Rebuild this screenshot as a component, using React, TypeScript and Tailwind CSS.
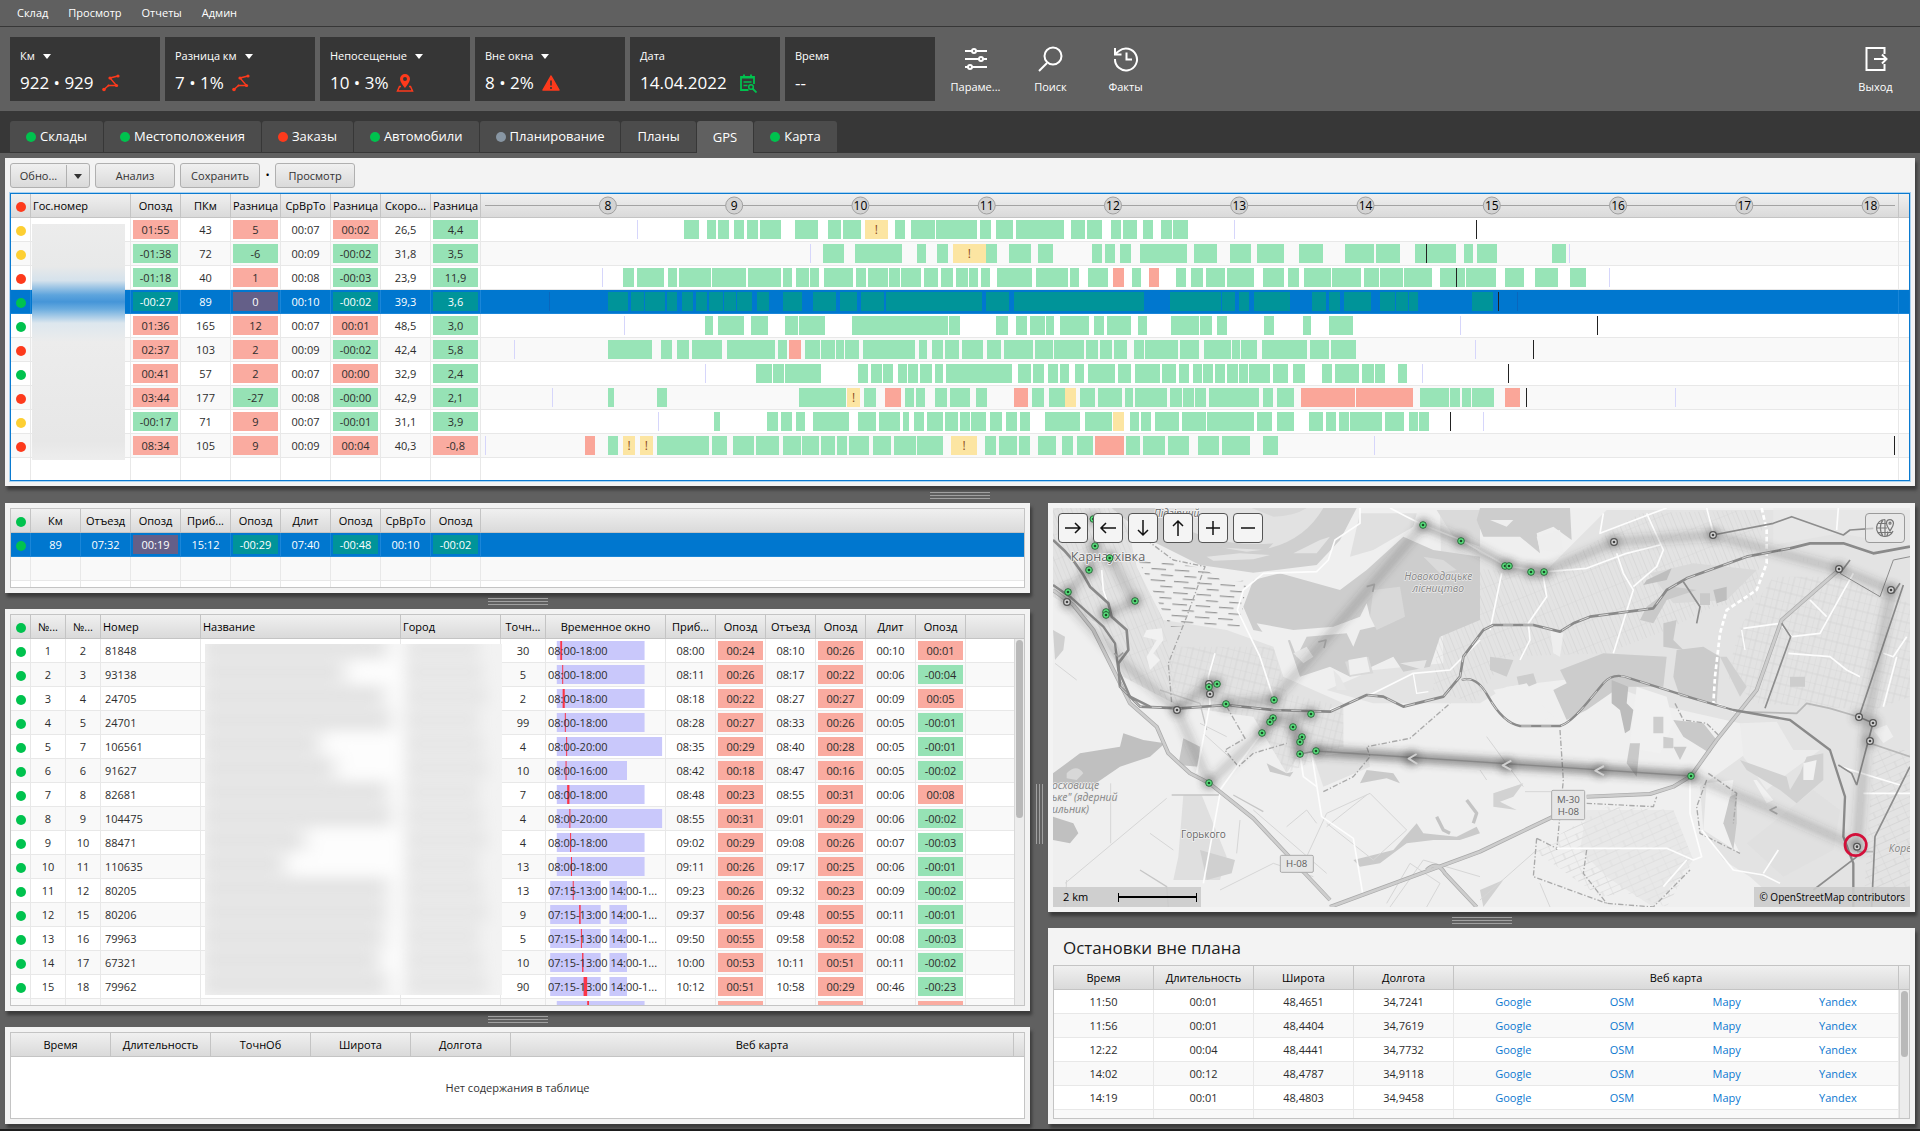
import { ReactNode } from "react";
import { clsx } from "clsx";

type Tone = "g" | "r" | "";

const badge: Record<string, string> = {
  g: "bg-[#96e2b5]",
  r: "bg-[#faaba0]",
  "": "",
};
const selectedBadge: Record<string, string> = {
  g: "bg-[#009499]",
  r: "bg-[#645f88]",
  "": "",
};
const dotColor: Record<string, string> = {
  g: "bg-[#00c24e]",
  r: "bg-[#fd3a1c]",
  y: "bg-[#fdcf33]",
  n: "bg-[#8896a3]",
};

function Dot({ color }: { color: string }) {
  return <span className={clsx("inline-block size-[10px] rounded-full align-middle", dotColor[color])} />;
}

function Caret({ className }: { className?: string }) {
  return (
    <svg viewBox="0 0 8 5" className={clsx("h-[5px] w-2", className)} fill="currentColor">
      <path d="M0 0h8L4 5z" />
    </svg>
  );
}

/* ---------- header ---------- */

function RouteIcon() {
  return (
    <svg viewBox="0 0 18 18" className="size-[18px]" fill="none" stroke="#fd3a1c" strokeWidth="1.4">
      <path d="M2 15.500L6.500 11.500 14.500 11.500 8 4 16 2" />
      <g fill="#fd3a1c" stroke="none">
        <circle cx="2" cy="15.500" r="1.800" />
        <circle cx="6.500" cy="11.500" r="1" />
        <circle cx="14.500" cy="11.500" r="1.600" />
        <circle cx="8" cy="4" r="1.600" />
        <circle cx="16" cy="2" r="1.600" />
      </g>
    </svg>
  );
}

function PinIcon() {
  return (
    <svg viewBox="0 0 18 18" className="size-[18px]" fill="#fd3a1c">
      <path d="M9 0a5 5 0 0 0-5 5C4 8.200 9 14 9 14s5-5.800 5-9a5 5 0 0 0-5-5zm0 7a2 2 0 1 1 0-4 2 2 0 0 1 0 4z" fillRule="evenodd" />
      <path d="M5 12.500H3.500L1.500 17h15l-2-4.500H13" fill="none" stroke="#fd3a1c" strokeWidth="1.500" />
    </svg>
  );
}

function WarnIcon() {
  return (
    <svg viewBox="0 0 18 18" className="size-[18px]" fill="#fd3a1c">
      <path d="M9 2L1 16h16z" stroke="#fd3a1c" strokeWidth="1.500" strokeLinejoin="round" />
      <path d="M9 6.500v5M9 13v2" stroke="#363636" strokeWidth="1.600" />
    </svg>
  );
}

function CalendarIcon() {
  return (
    <svg viewBox="0 0 18 20" className="ml-1 h-5 w-[18px]" fill="none" stroke="#00c24e" strokeWidth="1.800">
      <path d="M15 11V4h-13v13H9.500M5 1.500v4M12 1.500v4M2 4.500h13" />
      <path d="M4.500 9h8M4.500 12.500h4" strokeWidth="1.500" />
      <circle cx="12" cy="14" r="2.300" strokeWidth="1.500" />
      <path d="M13.500 15.500l4 4" />
    </svg>
  );
}

function Metric({ label, value, icon, caret }: { label: string; value: string; icon?: ReactNode; caret?: boolean }) {
  return (
    <div className="flex h-16 w-[150px] flex-col bg-[#363636] px-[10px] pt-[9px] text-white">
      <div className="flex items-center gap-2 text-[11px] leading-5">
        {label}
        {caret && <Caret />}
      </div>
      <div className="flex items-center gap-2 pt-[5px] text-[17px] leading-6">
        {value}
        {icon}
      </div>
    </div>
  );
}

function Tool({ label, children }: { label: string; children: ReactNode }) {
  return (
    <button className="flex w-[75px] flex-col items-center gap-[6px] pt-2 text-[11px] leading-4 text-white">
      <svg viewBox="0 0 28 28" className="size-7" fill="none" stroke="white" strokeWidth="2">
        {children}
      </svg>
      {label}
    </button>
  );
}

function Header() {
  return (
    <header className="flex h-[84px] items-start pt-[10px] pr-[7px] pl-[10px]">
      <div className="flex gap-[5px]">
        <Metric label="Км" value="922 • 929" icon={<RouteIcon />} caret />
        <Metric label="Разница км" value="7 • 1%" icon={<RouteIcon />} caret />
        <Metric label="Непосещеные" value="10 • 3%" icon={<PinIcon />} caret />
        <Metric label="Вне окна" value="8 • 2%" icon={<WarnIcon />} caret />
        <Metric label="Дата" value="14.04.2022" icon={<CalendarIcon />} />
        <Metric label="Время" value="--" />
      </div>
      <div className="flex pl-[3px]">
        <Tool label="Параме...">
          <path d="M3 6h7M14 6h11M3 14h14M21 14h4M3 22h3M10 22h15" />
          <circle cx="12" cy="6" r="2" />
          <circle cx="19" cy="14" r="2" />
          <circle cx="8" cy="22" r="2" />
        </Tool>
        <Tool label="Поиск">
          <circle cx="16" cy="11" r="8.500" />
          <path d="M10 18l-8 8" />
        </Tool>
        <Tool label="Факты">
          <path d="M3 14a11 11 0 1 0 4-8L3 9M3 3v6.500h6.500M14.500 7.500v7H20" />
        </Tool>
      </div>
      <div className="ml-auto">
        <Tool label="Выход">
          <path d="M22.500 9V3H4.500v22h18v-6M12 14h12M20 9.500l4.500 4.500-4.500 4.500" />
        </Tool>
      </div>
    </header>
  );
}

const tabs: [string, string][] = [
  ["g", "Склады"],
  ["g", "Местоположения"],
  ["r", "Заказы"],
  ["g", "Автомобили"],
  ["n", "Планирование"],
  ["", "Планы"],
  ["", "GPS"],
  ["g", "Карта"],
];

function Tabs() {
  return (
    <nav className="flex h-[42px] items-end gap-px bg-[#373737] px-[10px]">
      {tabs.map(([color, label]) => (
        <button
          key={label}
          className={clsx(
            "flex items-center gap-1 rounded-t-[3px] px-4 pt-px text-[13px] text-white",
            label === "GPS" ? "h-8 bg-[#606060]" : "mb-px h-[31px] bg-[#4c4c4c]"
          )}
        >
          {color && <Dot color={color} />}
          {label}
        </button>
      ))}
    </nav>
  );
}

/* ---------- shared panel parts ---------- */

function Panel({ className, children }: { className?: string; children: ReactNode }) {
  return (
    <section className={clsx("flex min-h-0 flex-col bg-[#f3f3f3] p-[5px] shadow-[2px_4px_3px_#3b3b3b]", className)}>
      {children}
    </section>
  );
}

function Grip({ vertical }: { vertical?: boolean }) {
  if (vertical) {
    return (
      <div className="flex w-[18px] items-center justify-center gap-[2px]">
        <i className="h-[60px] w-px bg-[#a0a0a0]" />
        <i className="h-[60px] w-px bg-[#a0a0a0]" />
        <i className="h-[60px] w-px bg-[#a0a0a0]" />
      </div>
    );
  }
  return (
    <div className="flex h-4 shrink-0 flex-col items-center justify-center gap-[2px]">
      <i className="h-px w-[60px] bg-[#a0a0a0]" />
      <i className="h-px w-[60px] bg-[#a0a0a0]" />
      <i className="h-px w-[60px] bg-[#a0a0a0]" />
    </div>
  );
}

function Cols({ widths }: { widths: number[] }) {
  return (
    <colgroup>
      {widths.map((w, i) => (
        <col key={i} style={w ? { width: w } : undefined} />
      ))}
    </colgroup>
  );
}

function Th({ children, left }: { children?: ReactNode; left?: boolean }) {
  return (
    <th
      className={clsx(
        "h-6 overflow-hidden border-r border-b border-[#c4c4c4] bg-linear-to-b from-[#f0f0f0] to-[#dadada] p-0 font-normal whitespace-nowrap text-black last:border-r-0",
        left && "text-left"
      )}
    >
      <div className={clsx("h-[19px] leading-[19px]", left && "pl-[2px]")}>{children}</div>
    </th>
  );
}

function Td({ children, tone = "", selected, left }: { children?: ReactNode; tone?: Tone; selected?: boolean; left?: boolean }) {
  return (
    <td
      className={clsx(
        "h-6 overflow-hidden border-r border-b px-[2px] py-0 whitespace-nowrap last:border-r-0",
        selected ? "border-[#1a86d8] text-white" : "border-[#e8e8e8]",
        left ? "text-left" : "text-center"
      )}
    >
      <div className={clsx("h-[19px] leading-[19px]", selected ? selectedBadge[tone] : badge[tone], left && "pl-[2px]")}>
        {children}
      </div>
    </td>
  );
}

function Scrollbar({ thumb }: { thumb: string }) {
  return (
    <div className="absolute top-6 right-0 bottom-0 w-[10px] border-l border-[#d8d8d8] bg-[#ececec] px-px pt-px">
      <div className={clsx("w-[7px] rounded-full bg-[#b9b9b9]", thumb)} />
    </div>
  );
}

const tableClass = "w-full table-fixed border-separate border-spacing-0 text-[11px] text-[#2d2d2d]";

/* ---------- vehicles and timeline ---------- */

// 300 units to the hour, hour 8 stands at 19
const AXIS_START = -273;
const AXIS_SPAN = 3350;
const pct = (v: number) => `${((v - AXIS_START) / AXIS_SPAN) * 100}%`;
const span = (v: number) => `${(v / AXIS_SPAN) * 100}%`;

type Vehicle = {
  status: string;
  cells: string[];
  tones: string;
  bars: string;
  plan: number[];
  end: number;
};

// bars: "from:to", r = red, y = yellow, ! = yellow with a mark
const vehicles: Vehicle[] = [
  {
    status: "y",
    cells: ["01:55", "43", "5", "00:07", "00:02", "26,5", "4,4"],
    tones: "r_r_r_g",
    bars: "200:235 254:277 281:306 318:342 350:375 380:430 463:518 542:572 577:620 630:684! 702:724 740:796 798:897 903:929 942:981 988:1103 1119:1153 1157:1194 1214:1238 1243:1277 1290:1314 1334:1359 1361:1398",
    plan: [88, 1506],
    end: 2082,
  },
  {
    status: "y",
    cells: ["-01:38", "72", "-6", "00:09", "-00:02", "31,8", "3,5"],
    tones: "g_g_g_g",
    bars: "530:580 606:717 753:774 800:828 838:917! 918:944 972:1024 1041:1076 1170:1192 1200:1224 1235:1262 1283:1395 1412:1466 1497:1547 1561:1625 1661:1718 1770:1839 1844:1902 1937:2035 2054:2074 2084:2132 2261:2295",
    plan: [498, 2303],
    end: 1962,
  },
  {
    status: "r",
    cells: ["-01:18", "40", "1", "00:08", "-00:03", "23,9", "11,9"],
    tones: "g_r_g_g",
    bars: "55:82 88:153 162:183 189:264 266:348 352:430 435:457 466:496 498:520 532:601 608:632 637:684 688:713 716:763 771:803 811:839 846:874 877:899 906:927 943:1026 1036:1112 1117:1139 1159:1208 1218:1245r 1265:1286 1304:1328r 1368:1393 1405:1434 1440:1486 1491:1555 1575:1625 1636:1662 1672:1737 1740:1809 1815:1851 1853:1909 1911:1978 1996:2055 2057:2129 2151:2196 2222:2276 2304:2342",
    plan: [5, 2398],
    end: 2035,
  },
  {
    status: "g",
    cells: ["-00:27", "89", "0", "00:10", "-00:02", "39,3", "3,6"],
    tones: "g_r_g_g",
    bars: "19:67 73:105 107:155 160:184 194:221 228:254 260:292 294:324 326:361 373:402 435:480 506:561 570:612 620:674 680:908 918:972 984:1293 1355:1476 1478:1509 1518:1543 1555:1640 1692:1726 1733:1759 1767:1832 1853:1888 1891:1921 1923:1943 2071:2122",
    plan: [-121, 2180],
    end: 2134,
  },
  {
    status: "g",
    cells: ["01:36", "165", "12", "00:07", "00:01", "48,5", "3,0"],
    tones: "r_r_r_g",
    bars: "249:269 280:342 359:399 440:470 473:498 500:535 599:826 829:855 941:970 988:1014 1023:1057 1060:1079 1092:1162 1174:1197 1205:1262 1279:1300 1357:1423 1425:1454 1466:1490 1577:1601 1670:1689 1733:1789",
    plan: [58, 2044],
    end: 2369,
  },
  {
    status: "r",
    cells: ["02:37", "103", "2", "00:09", "-00:02", "42,4", "5,8"],
    tones: "r_r_g_g",
    bars: "19:124 144:171 183:212 219:291 303:415 422:445 449:478r 487:523 525:558 561:580 582:615 626:748 758:778 789:814 820:854 860:910 919:954 961:1030 1033:1076 1078:1150 1155:1184 1187:1216 1221:1253 1269:1292 1295:1373 1379:1423 1436:1470 1472:1499 1501:1521 1523:1562 1573:1681 1687:1732 1737:1796",
    plan: [-205, 2080],
    end: 2216,
  },
  {
    status: "g",
    cells: ["00:41", "57", "2", "00:07", "00:00", "32,9", "2,4"],
    tones: "r_r_r_g",
    bars: "371:409 411:437 440:526 613:637 645:670 672:696 708:729 733:755 760:790 796:816 822:979 994:1025 1030:1055 1065:1089 1092:1114 1128:1151 1159:1224 1231:1261 1271:1330 1335:1369 1377:1399 1409:1430 1433:1457 1461:1486 1490:1516 1518:1539 1542:1592 1599:1635 1647:1676 1715:1740 1746:1803 1810:1839 1842:1866 1895:1917",
    plan: [249, 1954],
    end: 2158,
  },
  {
    status: "r",
    cells: ["03:44", "177", "-27", "00:08", "-00:00", "42,9", "2,1"],
    tones: "r_g_g_g",
    bars: "19:34 135:159 473:584 588:618! 627:656 677:716r 725:746 750:773 796:824 832:879 893:919 983:1018r 1026:1054 1068:1105 1106:1131y 1140:1177 1183:1240 1247:1267 1272:1348 1354:1383 1386:1411 1414:1440 1446:1565 1575:1600 1608:1650 1665:1794r 1796:1931r 1948:2017 2019:2043 2048:2070 2072:2124 2150:2186r",
    plan: [-114, 2555],
    end: 2200,
  },
  {
    status: "y",
    cells: ["-00:17", "71", "9", "00:07", "-00:01", "31,1", "3,9"],
    tones: "g_r_g_g",
    bars: "271:285 397:423 430:456 467:487 506:593 613:656 663:713 720:735 747:771 777:816 820:851 855:879 881:918 926:955 966:992 997:1022 1058:1140 1152:1216 1218:1246y 1259:1281 1285:1309 1320:1377 1383:1440 1442:1554 1561:1597 1608:1649 1684:1718 1726:1750 1756:1780 1783:1859 1866:1910 1923:1943 1945:1970",
    plan: [139, 2099],
    end: 2020,
  },
  {
    status: "r",
    cells: ["08:34", "105", "9", "00:09", "00:04", "40,3", "-0,8"],
    tones: "r_r_r_r",
    bars: "-36:-11r 19:44 55:84! 96:125! 135:260 266:303 316:367 370:426 435:478 480:520 526:558 563:587 592:639 650:691 698:751 753:816 834:896! 915:941 949:992 995:1022 1040:1083 1099:1124 1133:1171 1176:1246r 1250:1283 1290:1342 1349:1399 1421:1472 1478:1545 1576:1611",
    plan: [-272, 1838],
    end: 3074,
  },
];

function Timeline({ vehicle, selected }: { vehicle: Vehicle; selected: boolean }) {
  return (
    <svg className="block h-[19px] w-full" shapeRendering="crispEdges">
      {vehicle.plan.map((p) => (
        <rect key={p} x={pct(p)} width="1" height="19" fill={selected ? "#0a66bd" : "#d6d6fb"} />
      ))}
      {vehicle.bars.split(" ").map((bar) => {
        const [from, to] = bar.replace(/[ry!]/, "").split(":").map(Number);
        const yellow = bar.endsWith("!") || bar.endsWith("y");
        const fill = selected ? "#009499" : yellow ? "#fce5a2" : bar.endsWith("r") ? "#faa699" : "#98e4b7";
        return (
          <g key={bar}>
            <rect x={pct(from)} width={span(to - from)} height="19" fill={fill} />
            {bar.endsWith("!") && (
              <text x={pct((from + to) / 2)} y="14" textAnchor="middle" fill="#8a4a1c" fontSize="12">
                !
              </text>
            )}
          </g>
        );
      })}
      <rect x={pct(vehicle.end)} width="1" height="19" fill="#222" />
    </svg>
  );
}

function HourAxis() {
  const hours = [8, 9, 10, 11, 12, 13, 14, 15, 16, 17, 18];
  return (
    <svg className="ml-1 block h-[19px] w-[calc(100%-7px)]">
      <path d="M0 9.500H4000" stroke="#a3a3a3" />
      {hours.map((h) => (
        <g key={h}>
          <circle cx={pct(19 + (h - 8) * 300)} cy="9.500" r="8.500" fill="#d3d3d3" stroke="#a0a0a0" />
          <text x={pct(19 + (h - 8) * 300)} y="14" textAnchor="middle" fontSize="12">
            {h}
          </text>
        </g>
      ))}
    </svg>
  );
}

function VehiclesPanel() {
  const button =
    "h-[25px] rounded-[3px] border border-[#b0b0b0] bg-linear-to-b from-[#f0f0f0] to-[#dadada] pt-px text-[11px] text-[#333]";
  return (
    <Panel className="h-[328px] shrink-0">
      <div className="flex h-[30px] items-start gap-[5px]">
        <div className={clsx(button, "flex w-20 items-center")}>
          <button className="h-full flex-1 border-r border-[#b0b0b0]">Обно...</button>
          <button className="flex h-full w-[22px] items-center justify-center" aria-label="Ещё">
            <Caret />
          </button>
        </div>
        <button className={clsx(button, "w-20")}>Анализ</button>
        <button className={clsx(button, "w-20")}>Сохранить</button>
        <span className="flex h-[25px] w-[5px] items-center justify-center text-[11px]">•</span>
        <button className={clsx(button, "w-20")}>Просмотр</button>
      </div>
      <div className="relative h-[288px] overflow-hidden border border-[#0a7ad0] bg-white ring-1 ring-[#a9d2f0]">
        <table className={tableClass}>
          <Cols widths={[20, 100, 50, 50, 50, 50, 50, 50, 50, 0, 10]} />
          <thead>
            <tr>
              <Th><Dot color="r" /></Th>
              <Th left>Гос.номер</Th>
              {["Опозд", "ПКм", "Разница", "СрВрТо", "Разница", "Скоро...", "Разница"].map((h, i) => (
                <Th key={i}>{h}</Th>
              ))}
              <Th><HourAxis /></Th>
              <Th />
            </tr>
          </thead>
          <tbody>
            {vehicles.map((v, i) => {
              const selected = i === 3;
              return (
                <tr key={i} className={selected ? "bg-[#0077cf]" : i % 2 ? "bg-[#f9f9f9]" : "bg-white"}>
                  <Td selected={selected}><Dot color={v.status} /></Td>
                  <Td selected={selected} />
                  {v.cells.map((c, k) => (
                    <Td key={k} selected={selected} tone={v.tones[k].replace("_", "") as Tone}>{c}</Td>
                  ))}
                  <Td selected={selected}>
                    <div className="pr-px pl-[2px]">
                      <Timeline vehicle={v} selected={selected} />
                    </div>
                  </Td>
                  <Td selected={selected} />
                </tr>
              );
            })}
            <tr>
              {Array.from({ length: 11 }, (_, i) => <Td key={i} />)}
            </tr>
          </tbody>
        </table>
        {/* hidden plate numbers */}
        <svg viewBox="0 0 93 236" className="absolute top-[30px] left-[21px] h-[236px] w-[93px]">
          <defs>
            <linearGradient id="plates" x2="0" y2="1">
              <stop offset="0" stopColor="#ececec" />
              <stop offset=".18" stopColor="#e8e9e9" />
              <stop offset=".24" stopColor="#d5e2ec" />
              <stop offset=".3" stopColor="#5fa5dd" />
              <stop offset=".33" stopColor="#4595d8" />
              <stop offset=".36" stopColor="#6aacdf" />
              <stop offset=".42" stopColor="#dde7ee" />
              <stop offset=".5" stopColor="#ececec" />
              <stop offset=".92" stopColor="#e7e7e7" />
              <stop offset="1" stopColor="#ededed" />
            </linearGradient>
          </defs>
          <rect width="93" height="236" fill="url(#plates)" />
        </svg>
      </div>
    </Panel>
  );
}

/* ---------- left column ---------- */

function SummaryPanel() {
  const head = ["Км", "Отъезд", "Опозд", "Приб...", "Опозд", "Длит", "Опозд", "СрВрТо", "Опозд"];
  const row = ["89", "07:32", "00:19", "15:12", "-00:29", "07:40", "-00:48", "00:10", "-00:02"];
  const tones: Tone[] = ["", "", "r", "", "g", "", "g", "", "g"];
  return (
    <Panel className="h-[90px] shrink-0">
      <div className="h-20 overflow-hidden border border-[#c4c4c4] bg-white">
        <table className={tableClass}>
          <Cols widths={[20, 50, 50, 50, 50, 50, 50, 50, 50, 50, 0]} />
          <thead>
            <tr>
              <Th><Dot color="g" /></Th>
              {head.map((h, i) => <Th key={i}>{h}</Th>)}
              <Th />
            </tr>
          </thead>
          <tbody>
            <tr className="bg-[#0077cf]">
              <Td selected><Dot color="g" /></Td>
              {row.map((c, i) => <Td key={i} selected tone={tones[i]}>{c}</Td>)}
              <Td selected />
            </tr>
            {["bg-[#f9f9f9]", "bg-white"].map((bg) => (
              <tr key={bg} className={bg}>
                {Array.from({ length: 11 }, (_, i) => <Td key={i} />)}
              </tr>
            ))}
          </tbody>
        </table>
      </div>
    </Panel>
  );
}

const W10 = "08:00-18:00";
const W2 = "07:15-13:00 14:00-16:00";

// plan no, fact no, code, accuracy, window, arrival, late, departure, late, stay, late
const stops: string[][] = [
  ["1", "2", "81848", "30", W10, "08:00", "00:24", "08:10", "00:26", "00:10", "00:01"],
  ["2", "3", "93138", "5", W10, "08:11", "00:26", "08:17", "00:22", "00:06", "-00:04"],
  ["3", "4", "24705", "2", W10, "08:18", "00:22", "08:27", "00:27", "00:09", "00:05"],
  ["4", "5", "24701", "99", W10, "08:28", "00:27", "08:33", "00:26", "00:05", "-00:01"],
  ["5", "7", "106561", "4", "08:00-20:00", "08:35", "00:29", "08:40", "00:28", "00:05", "-00:01"],
  ["6", "6", "91627", "10", "08:00-16:00", "08:42", "00:18", "08:47", "00:16", "00:05", "-00:02"],
  ["7", "8", "82681", "7", W10, "08:48", "00:23", "08:55", "00:31", "00:06", "00:08"],
  ["8", "9", "104475", "4", "08:00-20:00", "08:55", "00:31", "09:01", "00:29", "00:06", "-00:02"],
  ["9", "10", "88471", "4", W10, "09:02", "00:29", "09:08", "00:26", "00:07", "-00:03"],
  ["10", "11", "110635", "13", W10, "09:11", "00:26", "09:17", "00:25", "00:06", "-00:01"],
  ["11", "12", "80205", "13", W2, "09:23", "00:26", "09:32", "00:23", "00:09", "-00:02"],
  ["12", "15", "80206", "9", W2, "09:37", "00:56", "09:48", "00:55", "00:11", "-00:01"],
  ["13", "16", "79963", "5", W2, "09:50", "00:55", "09:58", "00:52", "00:08", "-00:03"],
  ["14", "17", "67321", "10", W2, "10:00", "00:53", "10:11", "00:51", "00:11", "-00:02"],
  ["15", "18", "79962", "90", W2, "10:12", "00:51", "10:58", "00:29", "00:46", "-00:23"],
  ["16", "19", "79961", "8", W10, "11:00", "00:28", "11:10", "00:30", "00:10", "00:02"],
];

const minutes = (t: string) => {
  const [h, m] = t.split(":").map(Number);
  return h * 60 + m;
};
const windowPct = (m: number) => `${((m - 420) / 786) * 100}%`;
const shortWindow = (w: string) => (w.length > 19 ? `${w.slice(0, 19)}...` : w);
const late = (t: string): Tone => (t.startsWith("-") ? "g" : "r");

function TimeWindow({ stop }: { stop: string[] }) {
  const from = minutes(stop[5]) + minutes(stop[6]);
  const to = minutes(stop[7]) + minutes(stop[8]);
  return (
    <div className="relative">
      <svg className="absolute inset-0 h-[19px] w-full">
        {stop[4].split(" ").map((range) => {
          const [a, b] = range.split("-").map(minutes);
          return <rect key={range} x={windowPct(a)} width={`${((b - a) / 786) * 100}%`} height="19" fill="#c9c8fb" />;
        })}
        <rect x={windowPct(from)} width={Math.max(1, (to - from) * 0.15)} height="19" fill="#fb3548" />
      </svg>
      <div className="relative text-left">{shortWindow(stop[4])}</div>
    </div>
  );
}

const hiddenRows = [178, 135, 175, 182, 110, 125, 178, 182, 95, 75, 178, 178, 175, 170, 178];

function StopsPanel() {
  return (
    <Panel className="flex-1">
      <div className="relative min-h-0 flex-1 overflow-hidden border border-[#c4c4c4] bg-white">
        <table className={tableClass}>
          <Cols widths={[20, 35, 35, 100, 200, 100, 45, 120, 50, 50, 50, 50, 50, 50, 0]} />
          <thead>
            <tr>
              <Th><Dot color="g" /></Th>
              <Th>№...</Th>
              <Th>№...</Th>
              <Th left>Номер</Th>
              <Th left>Название</Th>
              <Th left>Город</Th>
              {["Точн...", "Временное окно", "Приб...", "Опозд", "Отъезд", "Опозд", "Длит", "Опозд"].map((h, i) => (
                <Th key={i}>{h}</Th>
              ))}
              <Th />
            </tr>
          </thead>
          <tbody>
            {stops.map((s, i) => (
              <tr key={i} className={i % 2 ? "bg-[#f9f9f9]" : "bg-white"}>
                <Td><Dot color="g" /></Td>
                <Td>{s[0]}</Td>
                <Td>{s[1]}</Td>
                <Td left>{s[2]}</Td>
                <Td />
                <Td />
                <Td>{s[3]}</Td>
                <Td><TimeWindow stop={s} /></Td>
                <Td>{s[5]}</Td>
                <Td tone={late(s[6])}>{s[6]}</Td>
                <Td>{s[7]}</Td>
                <Td tone={late(s[8])}>{s[8]}</Td>
                <Td>{s[9]}</Td>
                <Td tone={late(s[10])}>{s[10]}</Td>
                <Td />
              </tr>
            ))}
          </tbody>
        </table>
        {/* hidden names and cities */}
        <svg viewBox="0 0 297 351" className="absolute top-[29px] left-[194px] h-[351px] w-[297px]">
          <defs>
            <filter id="soft"><feGaussianBlur stdDeviation="7" /></filter>
          </defs>
          <rect width="297" height="351" fill="#f2f2f2" />
          <g filter="url(#soft)">
            {hiddenRows.map((w, i) => (
              <g key={i}>
                <rect x="0" y={i * 24 - 6} width={w} height="20" fill="#e3e3e3" />
                <rect x={w + 12} y={i * 24 - 8} width={185 - w} height="24" fill="#fdfdfd" />
                <rect x="202" y={i * 24 - 6} width={72 + (i % 3) * 4} height="20" fill="#e6e6e6" />
              </g>
            ))}
          </g>
        </svg>
        <Scrollbar thumb="h-[178px]" />
      </div>
    </Panel>
  );
}

function EmptyPanel() {
  return (
    <Panel className="h-[97px] shrink-0">
      <div className="flex h-full flex-col border border-[#c4c4c4] bg-white text-[11px]">
        <table className={tableClass}>
          <Cols widths={[100, 100, 100, 100, 100, 0, 10]} />
          <thead>
            <tr>
              {["Время", "Длительность", "ТочнОб", "Широта", "Долгота", "Веб карта", ""].map((h) => (
                <Th key={h}>{h}</Th>
              ))}
            </tr>
          </thead>
        </table>
        <p className="flex flex-1 items-center justify-center pt-px text-[#333]">Нет содержания в таблице</p>
      </div>
    </Panel>
  );
}

/* ---------- map ---------- */

const greenStops: [number, number][] = [
  [160, 87], [165, 168], [209, 204], [147, 240], [84, 306], [198, 366], [198, 375], [285, 333], [1149, 105],
  [1263, 153], [1395, 228], [1407, 228], [1473, 246], [1512, 246], [531, 582], [507, 591], [558, 642], [702, 630],
  [813, 672], [699, 684], [690, 696], [666, 729], [759, 711], [786, 741], [780, 756], [780, 792], [828, 783],
  [507, 879], [1953, 858],
];
const grayStops: [number, number][] = [
  [81, 336], [507, 582], [510, 612], [411, 660], [1722, 156], [2019, 135], [2397, 237], [2553, 300], [2457, 681],
  [2499, 699], [2490, 753], [2451, 1070],
];

function MapDrawing() {
  return (
    <svg
      viewBox="39 54 2571 1197"
      preserveAspectRatio="xMidYMid slice"
      className="absolute inset-0 h-full w-full"
      fill="none"
      strokeLinejoin="round"
    >
      <defs>
        <pattern id="streets" width="34" height="54" patternUnits="userSpaceOnUse" patternTransform="rotate(14)">
          <path d="M0 0H34M17 0V54M0 27H34M0 0V54" stroke="#d2d2d2" strokeWidth="2" />
        </pattern>
        <pattern id="streets2" width="26" height="70" patternUnits="userSpaceOnUse" patternTransform="rotate(-22)">
          <path d="M0 0H26M13 0V70M0 0V70" stroke="#d4d4d4" strokeWidth="2" />
        </pattern>
        <pattern id="streets3" width="38" height="60" patternUnits="userSpaceOnUse" patternTransform="rotate(66)">
          <path d="M0 0H38M19 0V60M0 30H19M0 0V60" stroke="#d1d1d1" strokeWidth="2" />
        </pattern>
        <pattern id="marsh" width="70" height="34" patternUnits="userSpaceOnUse" patternTransform="rotate(4)">
          <path d="M0 8H44M30 25H66" stroke="#7d7d7d" strokeWidth="3" />
        </pattern>
        <filter id="glow" x="-20%" y="-20%" width="140%" height="140%">
          <feGaussianBlur stdDeviation="12" />
        </filter>
      </defs>
      <rect x="39" y="54" width="2571" height="1197" fill="#efefef" />

      {/* built-up land */}
      <path
        d="M39 54H250L290 230 370 390 560 420 700 470 730 560 910 640V770L780 790 740 850 640 680 420 650 250 560 170 400 39 320Z"
        fill="#e2e2e2"
      />
      <path d="M39 54H250L290 230 370 390 420 650 250 560 170 400 39 320Z" fill="url(#streets2)" />
      <path d="M400 470H700L740 610 910 650V770L740 850 640 680 420 650 380 540Z" fill="url(#streets)" />
      <path
        d="M1200 60L1320 190 1500 260 1700 60H2610V1251H2500L2230 1251 2130 1160 2050 1110 1990 1020 1980 890 2120 790 2100 700 1880 650 1650 560 1400 590 1320 640 1000 640 860 600 1000 540 1210 520Z"
        fill="#e3e3e3"
      />
      <path d="M1210 220L1500 260 1800 70 2170 60 2150 330 2020 350 1880 420 1700 490 1400 500 1300 640 1180 600Z" fill="url(#streets2)" />
      <path d="M2200 260L2400 260 2610 340V620L2500 660 2150 640 2060 560 2100 410Z" fill="url(#streets)" />
      <path d="M2500 780H2610V1251H2470Z" fill="url(#streets3)" />
      <path d="M1480 1080L1700 950 1900 960 1960 1110 1880 1251 1760 1210 1680 1220Z" fill="url(#streets3)" />
      <path d="M1620 1080L1640 960 1900 960 1960 1110 1840 1251 1700 1160Z" fill="#e3e3e3" opacity=".6" />
      <path d="M2320 900L2400 960 2380 1080 2230 1160 2120 1060Z" fill="#e0e0e0" />
      <path d="M430 915H485L560 1100 540 1170 400 1170 415 1100Z" fill="#dfdfdf" />
      <path d="M1830 250L1960 220 2150 240 2060 330 1900 340Z" fill="#d9d9d9" />

      {/* water and woods */}
      <path d="M215 54H950L900 150 830 225 640 248 480 225 330 150Z" fill="#cfcfcf" />
      <path d="M370 54Q420 160 620 185 780 175 850 54Z" fill="#e2e2e2" />
      <path d="M390 90Q520 175 700 160L680 180 520 172 400 120Z" fill="#cfcfcf" />
      <path d="M635 54H800Q760 80 700 80Z" fill="#d8d8d8" />
      <path d="M500 200L600 190 690 195 640 208 520 212ZM760 190L840 150 870 140 830 190Z" fill="#e4e4e4" />
      <path d="M2200 54H2610V170L2400 130 2200 165Z" fill="#e9e9e9" opacity=".6" />
      <path
        d="M640 270L720 250 900 300 980 240 1090 140 1180 180 1320 200V390L1200 440 1170 530 1090 545 1060 500 930 560 870 530 780 560 740 440 640 420 610 350Z"
        fill="#cdcdcd"
      />
      <path d="M1190 60L1320 60V170L1240 140ZM1150 200L1210 210 1250 240 1200 250Z" fill="#dadada" />
      <path d="M960 70L1130 70 1120 110 1000 180 930 200Z" fill="#e0e0e0" />
      <path d="M650 400L760 420 880 410 960 380 980 340 990 380 1060 375 1050 400 960 420 940 470 920 430 800 440 770 500 750 450 690 460Z" fill="#efefef" />
      <path d="M760 490L800 470 820 500 790 520ZM890 600L880 540 900 560 920 600ZM1080 520L1160 510 1150 540Z" fill="#e6e6e6" />
      <path d="M915 515L985 500 1000 550 930 560ZM1000 300L1080 290 1095 380 1010 420 990 380Z" fill="#d9d9d9" />
      <path d="M925 510L980 500 990 545 930 555Z" fill="#efefef" />
      <path d="M1320 54H1590L1595 150 1540 110 1490 130 1500 190 1440 140 1330 140 1310 90Z" fill="#cdcdcd" />
      <path d="M1350 90H1420L1400 110ZM1490 140L1560 120 1570 190 1500 180Z" fill="#eeeeee" />
      <path d="M1560 540L1690 490 1880 500 1870 590 1740 590 1640 660 1580 690 1540 600 1580 580Z" fill="#cccccc" />
      <path d="M1910 480L1990 470 2040 500 2030 640 1920 620 1900 560Z" fill="#cbcbcb" />
      <path d="M2040 500L2060 500 2120 590 2100 620Z" fill="#d0d0d0" />
      <path d="M1715 570L1765 590 1760 640 1780 660 1770 720 1755 730 1740 660 1715 640Z" fill="#bcbcbc" />
      <path d="M1820 270L1895 235 1880 270 1810 285ZM2020 300L2060 290 2060 330 2030 340Z" fill="#bebebe" />
      <path d="M1820 350L1900 290 1970 300 1880 330 1840 400 1800 390ZM1870 400L1910 390 1900 450 1930 480 1870 470ZM1980 310H2010V345H1980Z" fill="#c9c9c9" />
      <path d="M1350 500L1420 510 1400 560 1350 540ZM1430 560L1480 550 1490 580 1440 600Z" fill="#cdcdcd" />
      <path d="M1360 600L1460 580 1500 640 1540 680 1480 700 1420 690Z" fill="#efefef" />
      <path d="M1530 420L1570 430 1560 500 1540 490Z" fill="#eeeeee" />
      <path d="M1790 590L1880 620 1900 700 1860 790 1800 780 1760 860 1770 760Z" fill="#f1f1f1" />
      <path d="M1900 690L1990 700 2030 750 2010 790 1930 740ZM1770 760H1800L1790 860 1760 820ZM1900 770H1940L1920 810Z" fill="#c9c9c9" />
      <path d="M1840 680H1870V730H1840ZM1870 740L1900 745V775H1870ZM2250 560H2295V590H2250Z" fill="#cdcdcd" />
      <path d="M2100 700L2210 695 2260 780 2340 780 2230 860 2180 900 2110 800Z" fill="#ececec" />
      <path d="M2100 810L2240 860 2250 900 2280 850 2300 800 2350 790 2350 870 2270 940 2220 900 2120 840Z" fill="#d1d1d1" />
      <path d="M2140 870L2150 870 2200 930 2180 940ZM2290 820L2330 810 2320 870 2290 870Z" fill="#f1f1f1" />
      <path d="M2000 880L2080 870 2060 1010 2100 1090 1990 1020Z" fill="#f1f1f1" />
      <path d="M2070 920L2090 910 2090 1000 2080 1080 2050 1000Z" fill="#c9c9c9" />
      <path d="M2500 720L2540 705 2560 740 2530 760Z" fill="#efefef" />
      <path d="M39 850L120 790 240 770 250 730 310 750 375 760 330 800 240 830 160 885 39 880ZM39 980L100 1000 115 1030 90 1060 39 1050Z" fill="#c0c0c0" />
      <path d="M430 745L480 770 475 830 415 825Z" fill="#c6c6c6" />
      <path d="M80 850Q110 820 130 850L110 870 80 865Z" fill="#d8d8d8" />
      <path d="M39 420L75 440 70 480 45 510ZM480 1080L585 1110 575 1150 500 1170Z" fill="#d0d0d0" />
      <path d="M320 420L365 415 370 450 340 490 360 510 330 540 320 500 350 450 310 440Z" fill="#f1f1f1" />
      <path d="M680 820L740 850 760 845 750 860 690 845ZM980 840L1060 850 1080 880 1040 865 960 880ZM1130 1000L1150 1030 1200 1035 1250 1040 1310 1010 1320 1030 1260 1050 1180 1050 1100 1060 1020 1120 960 1130 940 1110 1060 1080Z" fill="#cacaca" />
      <path d="M1190 980L1210 1020 1230 1030M1280 930L1310 970 1300 1000" stroke="#c4c4c4" strokeWidth="10" />
      <path d="M820 800L980 780 990 830 850 890Z" fill="#e2e2e2" />
      <path d="M290 200L490 235 560 280 620 270 600 410 390 410Z" fill="url(#marsh)" />
      <path d="M1360 910L1450 880 1420 920 1380 935 1430 960 1360 950ZM1320 1200L1390 1170 1330 1251Z" fill="#d2d2d2" />

      {/* fields and minor tracks */}
      <g stroke="#d6d6d6" strokeWidth="3">
        <path d="M75 1180L380 925M212 880V1060M80 1170L75 1251M600 990L590 1090M860 970L990 910 1100 1020 1000 1110 860 1000M860 970L800 1100M980 915L860 1010M540 1200L700 1120 820 1160M1050 1251L1150 1110 1320 1160M330 1030L400 1080M640 960L860 1150" />
        <path d="M1340 740L1450 890M1455 905H1540M1490 1080L1320 1230M1500 1180L1530 1251M1320 840L1340 870M490 730L600 830M480 700L560 740M45 520L110 570M1040 1240L1110 1120 1200 1180 1160 1251M740 1010L800 960 830 1000" />
      </g>
      <path d="M395 915H540M360 600L480 640 500 720M300 1140L380 1190 385 1251M580 915L670 965" stroke="#c6c6c6" strokeWidth="4" />

      {/* dashed boundaries */}
      <g stroke="#a9a9a9" strokeWidth="4" strokeDasharray="16 6 4 6">
        <path d="M320 150L400 210 495 230 440 380 385 520 395 640" />
        <path d="M560 650L615 745 555 780 595 830 640 790 740 760M850 905L940 860 990 800 980 770 1110 745 1230 640" />
        <path d="M1560 720L1570 870 1550 1080M1490 1045L1480 1160 1700 1240 1840 1251 1950 1140M1490 1045L1550 1075M1640 1080L1630 1150 1700 1240M1640 940L1840 950 1850 920" />
        <path d="M1905 640L1930 690 2000 700 2040 740M2000 870L1970 950 1980 1030 2100 1090M2005 850L2090 910 2080 1000" />
      </g>

      {/* white roads */}
      <g stroke="#fdfdfd" strokeWidth="5">
        <path d="M1050 54L1100 80 1150 105 1263 150 1400 228 1520 245 1640 235 1760 190 1860 165M960 54V100L885 150 865 210 830 245 670 250 610 300 592 360 660 500 702 630" />
        <path d="M525 490L505 560 510 640 470 850M185 240L190 300 210 360M540 900L590 830 666 729M540 910L490 1180M780 792L790 860 830 890M815 790L845 980 940 1045 968 1210M870 660L1000 610 1120 550 1230 540 1320 450" />
        <path d="M1385 250L1350 420M1510 260L1520 320 1465 400 1470 450 1440 510M1690 70L1680 130 1810 80 1880 54M1730 190L1750 250 1780 300 1720 490M1820 70L1870 180 1850 230 1780 290M2000 54L2020 130M2110 415L2220 400 2255 440 2340 430 2440 250M2310 330L2360 380M2245 490L2370 500 2420 540 2460 560M1950 860V970L1985 1100 1960 1110 1880 1075H1550M1940 1110L1870 1190M1985 1020L2080 1140 2170 1155 2220 1180M2170 1150L2215 1080M2400 830L2580 885M2470 910H2610M2530 490L2560 500 2600 440M2570 500L2530 650M2395 54L2390 120" />
        <path d="M1120 550L1130 610 1165 605M2105 420L2115 480" strokeWidth="4" />
      </g>
      <path d="M2165 54L2180 120 2180 220 2150 300 2060 360 2040 430 2025 560 2020 640 2090 665" stroke="#fff" strokeWidth="8" strokeDasharray="14 8" />

      {/* major roads */}
      <g stroke="#a9a9a9" strokeWidth="12">
        <path d="M39 300L100 345 160 420 230 560 270 640 350 710 385 790 450 850 507 879 640 985 870 1230" />
        <path d="M870 1251L1320 1085 1560 970M1640 920L1830 912 1900 890 1953 858 2030 750 2150 600 2225 390 2390 245M1160 1140Q1190 1110 1215 1150L1310 1251" />
      </g>
      <g stroke="#cdcdcd" strokeWidth="8">
        <path d="M39 300L100 345 160 420 230 560 270 640 350 710 385 790 450 850 507 879 640 985 870 1230" />
        <path d="M870 1251L1320 1085 1560 970M1640 920L1830 912 1900 890 1953 858 2030 750 2150 600 2225 390 2390 245M1160 1140Q1190 1110 1215 1150L1310 1251" />
      </g>
      <g stroke="#8d8d8d" strokeWidth="5">
        <path d="M2019 135L2200 100 2255 80 2410 135 2430 120 2500 115M2225 400L2252 440 2175 655M2430 210L2400 250M2590 285L2457 681 2499 699 2450 885M2395 825L2435 850 2450 885M2610 830L2505 1040 2495 1251M2451 1100L2320 1200M2580 280L2560 310M1930 275L1980 350 1970 400" />
        <path d="M2400 250L2520 320 2560 210 2610 200" strokeWidth="3" />
        <path d="M2457 681L2370 655 2300 640 2270 670 2090 665M2451 1085H2500M2490 760L2610 800" stroke="#b8b8b8" />
      </g>

      {/* railways */}
      <g stroke="#8a8a8a">
        <path
          d="M39 150Q110 210 150 290L205 340 215 380 260 420 265 480 235 520 240 590 300 650 420 655 560 645 700 660 870 665 980 615 1030 620 1090 650 1210 620 1260 560 1270 500 1330 420 1360 405 1480 405 1560 425 1600 400 1650 380 1840 355 1880 300 1940 265 2120 200 2250 175 2310 160 2410 160 2500 190 2610 170"
          strokeWidth="8"
        />
        <path
          d="M39 285L90 320 190 410 225 460 235 540 270 620 330 650M1265 570Q1310 555 1345 620 1390 700 1440 708L1560 708Q1590 700 1640 640L1690 580Q1720 545 1770 565L1960 625 2080 660 2250 690 2370 780 2415 920 2410 1040 2440 1120V1251"
          strokeWidth="7"
        />
      </g>
      <g stroke="#d4d4d4" strokeWidth="3" strokeDasharray="30 30">
        <path d="M240 590L300 650 420 655 560 645 700 660 870 665 980 615 1030 620 1090 650 1210 620 1260 560 1270 500 1330 420 1360 405 1480 405 1560 425 1600 400 1650 380 1840 355 1880 300 1940 265 2120 200 2250 175" />
        <path d="M1265 570Q1310 555 1345 620 1390 700 1440 708L1560 708Q1590 700 1640 640L1690 580Q1720 545 1770 565L1960 625 2080 660" />
      </g>

      {/* driven track */}
      <g stroke="#3a3a3a" strokeWidth="14" filter="url(#glow)" strokeLinecap="round">
        <path d="M828 783L1953 858" strokeWidth="20" opacity=".75" />
        <path d="M702 630L1149 105M1512 246L1722 156 2019 135 2397 237 2553 300 2480 700 2451 1070" opacity=".4" />
        <path d="M1149 105L1263 153 1407 228 1512 246" opacity=".6" />
        <path d="M1953 858L2200 960 2451 1070M81 336L240 510 411 660 507 879 666 729 699 684M209 204L285 333 198 375M84 306L147 240 165 168" opacity=".38" />
        <path d="M411 660L507 582M558 642L702 630M759 711L780 792M813 672L700 690" opacity=".5" />
      </g>
      <path d="M780 792L828 783 1953 858" stroke="#777" strokeWidth="4" opacity=".6" />
      {/* dark halo of each stop */}
      <g fill="#333" opacity=".45" filter="url(#glow)">
        {[...greenStops, ...grayStops].map(([x, y]) => (
          <circle key={`${x}-${y}`} cx={x} cy={y} r="17" />
        ))}
        <circle cx="1115" cy="805" r="22" />
        <circle cx="1400" cy="826" r="20" />
        <circle cx="1680" cy="842" r="18" />
      </g>
      <g stroke="#d0d0d0" strokeWidth="6">
        <path d="M1130 792L1106 806 1132 822M1414 812L1388 826 1414 840M1692 828L1666 842 1692 856" />
      </g>
      <g stroke="#9c9c9c" strokeWidth="5">
        <path d="M835 456L858 450 852 474M980 290L1003 283 998 306M222 490L236 500 250 488M2210 950L2190 960 2212 972" />
      </g>

      {/* labels */}
      <g fill="#666" stroke="#f2f2f2" strokeWidth="5" paintOrder="stroke">
        <text x="92" y="214" fontSize="38">Карнаухівка</text>
        <text x="342" y="82" fontStyle="italic" fontSize="30">Підгірний</text>
        <text x="423" y="1043" fontSize="30">Горького</text>
      </g>
      <g fill="#858585" fontSize="31" fontStyle="italic" stroke="#ececec" strokeWidth="4" paintOrder="stroke">
        <text x="1195" y="269" textAnchor="middle">Новокодацьке</text>
        <text x="1195" y="305" textAnchor="middle">лісництво</text>
        <text x="36" y="897">осховище</text>
        <text x="36" y="933">ьке" (ядерний</text>
        <text x="36" y="969">ильник)</text>
        <text x="2546" y="1085">Корея</text>
      </g>
      <g fill="#5f5f5f" fontSize="29" textAnchor="middle">
        <rect x="721" y="1096" width="99" height="51" rx="4" fill="#e6e6e6" stroke="#ababab" strokeWidth="3" />
        <text x="770" y="1132">Н-08</text>
        <rect x="1535" y="901" width="99" height="88" rx="4" fill="#e6e6e6" stroke="#ababab" strokeWidth="3" />
        <text x="1585" y="939">М-30</text>
        <text x="1585" y="975">Н-08</text>
      </g>

      {/* stops */}
      {grayStops.map(([x, y]) => (
        <g key={`${x}-${y}`}>
          <circle cx={x} cy={y} r="10" fill="#d6d6d6" stroke="#555" strokeWidth="4" />
          <circle cx={x} cy={y} r="4" fill="#444" />
        </g>
      ))}
      {greenStops.map(([x, y]) => (
        <g key={`${x}-${y}`}>
          <circle cx={x} cy={y} r="10" fill="#58e07c" stroke="#2d6b3c" strokeWidth="3" />
          <circle cx={x} cy={y} r="4" fill="#1e4a2a" />
        </g>
      ))}
      <circle cx="2447" cy="1065" r="32" stroke="#d3103a" strokeWidth="8" />
    </svg>
  );
}

const mapButtons: [string, string][] = [
  ["Вправо", "M7 15h15M17 10l5 5-5 5"],
  ["Влево", "M23 15H8M13 10l-5 5 5 5"],
  ["Вниз", "M15 7v15M10 17l5 5 5-5"],
  ["Вверх", "M15 23V8M10 13l5-5 5 5"],
  ["Приблизить", "M8 15h14M15 8v14"],
  ["Отдалить", "M8 15h14"],
];

function MapPanel() {
  return (
    <Panel className="h-[409px] shrink-0">
      <div className="relative flex-1 overflow-hidden">
        <MapDrawing />
        <div className="absolute top-[5px] left-[5px] flex gap-[5px]">
          {mapButtons.map(([label, d]) => (
            <button key={label} aria-label={label} className="size-[30px] rounded-[4px] border border-[#555] bg-[#f4f4f4]">
              <svg viewBox="1 1 28 28" className="size-7" fill="none" stroke="#111" strokeWidth="1.500">
                <path d={d} />
              </svg>
            </button>
          ))}
        </div>
        <button
          aria-label="Слои"
          className="absolute top-[5px] right-[5px] flex h-[30px] w-10 items-center justify-center rounded-[4px] border border-[#9a9a9a] bg-[#e9e9e9]/60"
        >
          <svg viewBox="0 0 20 20" className="size-5" fill="none" stroke="#777" strokeWidth="1.200">
            <path d="M10 1.500A8.500 8.500 0 1 0 18 13M1.500 10H12M3 5.500h8M3 14.500h14M10 1.500v17M8 2C4.500 6 4.500 14 8 18M12.500 13.500c1 2 0 3.500-1 4.800" />
            <path d="M15 13c-2-3.500-3.500-5.500-3.500-7.800a3.500 3.500 0 0 1 7 0C18.500 7.500 17 9.500 15 13z" />
            <circle cx="15" cy="5.200" r="1" />
          </svg>
        </button>
        <div className="absolute bottom-0 left-0 flex h-5 w-[148px] items-center justify-between bg-[#cbcbcb]/90 pr-1 pl-[10px] text-[11px] text-black">
          2 km
          <span className="h-[9px] w-[79px] border-x border-black py-[3px]">
            <span className="block h-[2px] bg-black" />
          </span>
        </div>
        <div className="absolute right-0 bottom-0 flex h-5 items-center bg-[#cbcbcb]/90 px-[5px] text-[10px] text-black">
          © OpenStreetMap contributors
        </div>
      </div>
    </Panel>
  );
}

/* ---------- unplanned stops ---------- */

const unplanned = [
  ["11:50", "00:01", "48,4651", "34,7241"],
  ["11:56", "00:01", "48,4404", "34,7619"],
  ["12:22", "00:04", "48,4441", "34,7732"],
  ["14:02", "00:12", "48,4787", "34,9118"],
  ["14:19", "00:01", "48,4803", "34,9458"],
  ["14:36", "00:01", "48,4736", "34,9982"],
];

function UnplannedPanel() {
  return (
    <Panel className="flex-1">
      <h2 className="h-8 shrink-0 px-[10px] pt-[3px] text-[17px] leading-6 text-[#1c1c1c]">Остановки вне плана</h2>
      <div className="relative min-h-0 flex-1 overflow-hidden border border-[#c4c4c4] bg-white">
        <table className={tableClass}>
          <Cols widths={[100, 100, 100, 100, 0, 10]} />
          <thead>
            <tr>
              {["Время", "Длительность", "Широта", "Долгота", "Веб карта", ""].map((h) => (
                <Th key={h}>{h}</Th>
              ))}
            </tr>
          </thead>
          <tbody>
            {unplanned.map((row, i) => (
              <tr key={i} className={i % 2 ? "bg-[#f9f9f9]" : "bg-white"}>
                {row.map((c, k) => <Td key={k}>{c}</Td>)}
                <Td>
                  <div className="flex justify-around text-[#0b78d0]">
                    {["Google", "OSM", "Mapy", "Yandex"].map((site) => (
                      <a key={site} href="#">{site}</a>
                    ))}
                  </div>
                </Td>
                <Td />
              </tr>
            ))}
          </tbody>
        </table>
        <Scrollbar thumb="h-[66px]" />
      </div>
    </Panel>
  );
}

export default function App() {
  return (
    <div className="flex h-screen flex-col overflow-hidden border-b-2 border-[#1d1d1d] bg-[#606060] font-['Open_Sans','Noto_Sans',sans-serif]">
      <nav className="flex h-[27px] shrink-0 items-center gap-5 border-b border-[#373737] px-[17px] pt-px text-[11px] text-white">
        {["Склад", "Просмотр", "Отчеты", "Админ"].map((m) => (
          <button key={m}>{m}</button>
        ))}
      </nav>
      <Header />
      <Tabs />
      <main className="flex min-h-0 flex-1 flex-col p-[5px]">
        <VehiclesPanel />
        <div className="pt-px">
          <Grip />
        </div>
        <div className="flex min-h-0 flex-1">
          <div className="flex min-w-0 flex-[1025] flex-col">
            <SummaryPanel />
            <Grip />
            <StopsPanel />
            <Grip />
            <EmptyPanel />
          </div>
          <Grip vertical />
          <div className="flex min-w-0 flex-[867] flex-col">
            <MapPanel />
            <Grip />
            <UnplannedPanel />
          </div>
        </div>
      </main>
    </div>
  );
}
